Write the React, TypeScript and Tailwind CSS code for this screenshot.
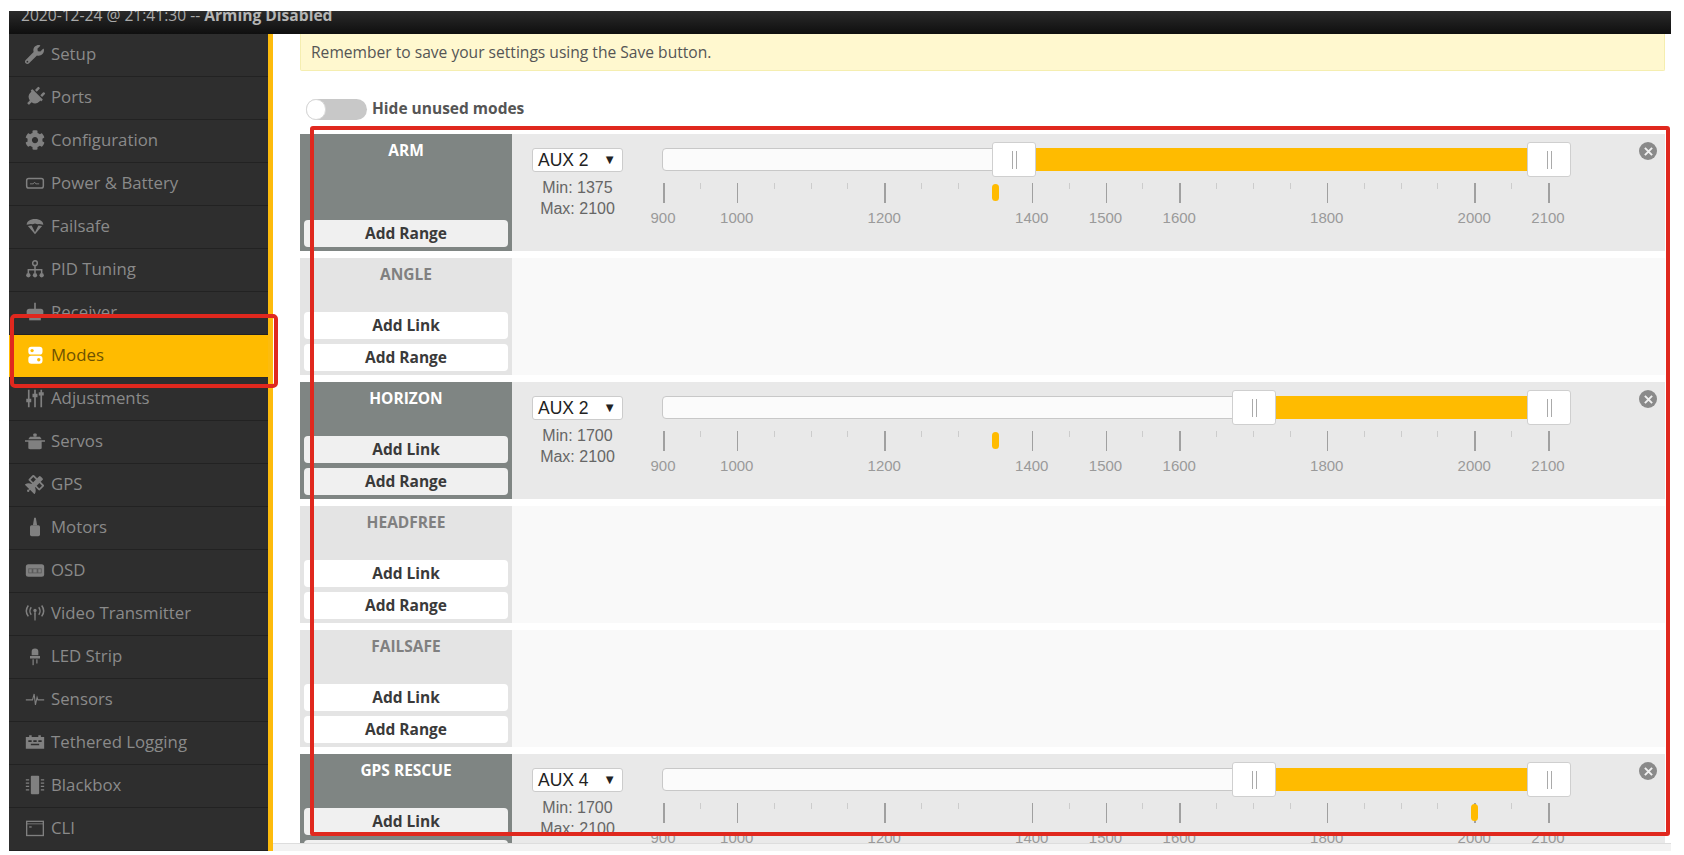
import React from "react";
import { FaWrench, FaPlug, FaCog, FaSatellite } from "react-icons/fa";

const Svg = ({ children }: { children: React.ReactNode }) => (
  <svg viewBox="0 0 24 24" className="h-[20px] w-[20px]" fill="currentColor">
    {children}
  </svg>
);

const icons: Record<string, React.ReactNode> = {
  Setup: <FaWrench className="h-[19px] w-[19px]" />,
  Ports: <FaPlug className="h-[20px] w-[20px] rotate-45" />,
  Configuration: <FaCog className="h-[20px] w-[20px]" />,
  "Power & Battery": (
    <Svg>
      <rect x="2" y="6.500" width="20" height="11.500" rx="2.500" fill="none" stroke="currentColor" strokeWidth="1.800" />
      <path d="M6 13h4l1.500-2 1.500 2h4" fill="none" stroke="currentColor" strokeWidth="1.100" />
    </Svg>
  ),
  Failsafe: (
    <Svg>
      <path d="M2 10.500c0-4 4-7 10-7s10 3 10 7l-5-1-2 .5-3-1-3 1-2-.5z" />
      <path d="M3.500 12l8.500 10 8.500-10-4.500-.5-4 8-4-8z" />
    </Svg>
  ),
  "PID Tuning": (
    <Svg>
      <circle cx="12" cy="5" r="2.800" fill="none" stroke="currentColor" strokeWidth="1.800" />
      <path d="M12 8v9M4 17v-4h16v4" fill="none" stroke="currentColor" strokeWidth="1.800" />
      <circle cx="4" cy="19.500" r="2.600" />
      <circle cx="12" cy="19.500" r="2.600" />
      <circle cx="20" cy="19.500" r="2.600" />
    </Svg>
  ),
  Receiver: (
    <Svg>
      <path d="M11 1h2v8h-2z" />
      <rect x="2" y="8" width="20" height="10" rx="3" />
      <rect x="5" y="19" width="14" height="3" />
    </Svg>
  ),
  Modes: (
    <Svg>
      <rect x="4" y="2" width="17" height="9.500" rx="3.500" fill="#ffffff" />
      <rect x="4" y="13" width="17" height="9.500" rx="3.500" fill="#ffffff" />
      <circle cx="8.500" cy="6.700" r="2" fill="#ffbb00" />
      <circle cx="16.500" cy="17.700" r="2" fill="#ffbb00" />
    </Svg>
  ),
  Adjustments: (
    <Svg>
      <path d="M3.500 2h2v21h-2zM11 2h2v21h-2zM18.500 2h2v21h-2z" />
      <path d="M1.500 13h6v4h-6zM9 7h6v4H9zM16.500 5h6v4h-6z" />
    </Svg>
  ),
  Servos: (
    <Svg>
      <rect x="10" y="3" width="4" height="4" rx="1" />
      <path d="M6 7h12l2 3H4z" />
      <path d="M0 11h24v2h-4v8l-2 1H6l-2-1v-8H0z" />
    </Svg>
  ),
  GPS: <FaSatellite className="h-[19px] w-[19px]" />,
  Motors: (
    <Svg>
      <path d="M11 1h2l1.500 9h-5z" />
      <rect x="6" y="10" width="12" height="13" rx="2" />
    </Svg>
  ),
  OSD: (
    <Svg>
      <rect x="1" y="5" width="22" height="15" rx="3" />
      <path d="M4 10h16v6H4z" fill="#5a5a5a" />
      <path d="M5 11h3v4H5zM10 11h4v4h-4zM16 11h3v4h-3z" />
    </Svg>
  ),
  "Video Transmitter": (
    <Svg>
      <path d="M11 11h2l-.3 10h-1.400z" />
      <circle cx="12" cy="9" r="2" />
      <path
        d="M7.500 5c-2 2.500-2 6.500 0 9M16.500 5c2 2.500 2 6.500 0 9M4 3c-3 4-3 9 0 13M20 3c3 4 3 9 0 13"
        fill="none"
        stroke="currentColor"
        strokeWidth="1.800"
      />
    </Svg>
  ),
  "LED Strip": (
    <Svg>
      <path d="M8 11V7a4 4 0 0 1 8 0v4z" />
      <rect x="6" y="12" width="12" height="3" />
      <rect x="9" y="16" width="1.500" height="7" />
      <rect x="13.500" y="16" width="1.500" height="5" />
    </Svg>
  ),
  Sensors: (
    <Svg>
      <path d="M1 13h8l2-7 1.500 13 2-9 1 3h7.500" fill="none" stroke="currentColor" strokeWidth="1.300" />
    </Svg>
  ),
  "Tethered Logging": (
    <Svg>
      <path d="M1 6h4v-2h3v2h8v-2h3v2h4v14H1z" />
      <path d="M4 10h4v2H4zM10 10h4v2h-4zM16 10h4v2h-4zM7 14h10v2H7z" fill="#2e2e2e" />
    </Svg>
  ),
  Blackbox: (
    <Svg>
      <rect x="7" y="1" width="10" height="22" rx="1" />
      <path d="M1 5h4v1.500H1zM1 9h4v1.500H1zM1 13h4v1.500H1zM1 17h4v1.500H1zM19 5h4v1.500h-4zM19 9h4v1.500h-4zM19 13h4v1.500h-4zM19 17h4v1.500h-4z" />
    </Svg>
  ),
  CLI: (
    <Svg>
      <rect x="2" y="4" width="20" height="17" fill="none" stroke="currentColor" strokeWidth="1.600" />
      <path d="M2 7h20" stroke="currentColor" strokeWidth="1" />
      <path d="M5 10h3v1.500H5z" />
    </Svg>
  ),
};

const menu = [
  "Setup",
  "Ports",
  "Configuration",
  "Power & Battery",
  "Failsafe",
  "PID Tuning",
  "Receiver",
  "Modes",
  "Adjustments",
  "Servos",
  "GPS",
  "Motors",
  "OSD",
  "Video Transmitter",
  "LED Strip",
  "Sensors",
  "Tethered Logging",
  "Blackbox",
  "CLI",
];

const modes = [
  { name: "ARM", link: false, aux: "AUX 2", min: 1375, max: 2100, marker: 1350 },
  { name: "ANGLE", link: true },
  { name: "HORIZON", link: true, aux: "AUX 2", min: 1700, max: 2100, marker: 1350 },
  { name: "HEADFREE", link: true },
  { name: "FAILSAFE", link: true },
  { name: "GPS RESCUE", link: true, aux: "AUX 4", min: 1700, max: 2100, marker: 2000 },
];

const bigTicks = [900, 1000, 1200, 1400, 1500, 1600, 1800, 2000, 2100];
const smallTicks = [950, 1050, 1100, 1150, 1250, 1300, 1450, 1550, 1650, 1700, 1750, 1850, 1900, 1950, 2050];

// 900..2100 on the 885px wide slider
const pos = (v: number) => ((v - 900) / 1200) * 885;

const Handle = ({ value }: { value: number }) => (
  <div
    className="absolute top-[-6px] ml-[-21px] flex h-[35px] w-[44px] items-center justify-center gap-[3px] rounded-[3px] border border-[#cfcfcf] bg-white"
    style={{ left: pos(value) }}
  >
    <span className="h-[18px] w-px bg-[#aaaaaa]" />
    <span className="h-[18px] w-px bg-[#aaaaaa]" />
  </div>
);

const RangeSlider = ({ min, max, marker }: { min: number; max: number; marker: number }) => (
  <div className="relative ml-10 h-full w-[885px] font-['Liberation_Sans',Arial,sans-serif]">
    <div className="absolute left-[-1px] top-0 h-[23px] w-full rounded-l-[4px] border border-[#c8c8c8] bg-[#fbfbfb]" />
    <div
      className="absolute top-0 h-[23px] bg-[#ffbb00]"
      style={{ left: pos(min), width: pos(max) - pos(min) }}
    />
    <Handle value={min} />
    <Handle value={max} />
    {smallTicks.map((t) => (
      <span
        key={t}
        className="absolute top-[35px] h-[6px] w-px bg-[#cccccc]"
        style={{ left: pos(t) }}
      />
    ))}
    {bigTicks.map((t) => (
      <React.Fragment key={t}>
        <span
          className="absolute top-[35px] h-[20px] w-[1.500px] bg-[#a0a0a0]"
          style={{ left: pos(t) }}
        />
        <span
          className="absolute top-[60px] ml-[-25px] w-[50px] text-center text-[15px] leading-[20px] text-[#9a9a9a]"
          style={{ left: pos(t) }}
        >
          {t}
        </span>
      </React.Fragment>
    ))}
    <span
      className="absolute top-[36px] ml-[-3px] h-[17px] w-[7px] rounded-[4px] bg-[#ffbb00]"
      style={{ left: pos(marker) }}
    />
  </div>
);

const AddButton = ({ label, active }: { label: string; active: boolean }) => (
  <div
    className={
      "flex h-[27px] items-center justify-center rounded-[4px] text-[15.500px] font-bold text-[#3a3a3a] " +
      (active ? "bg-[#f0f0f0]" : "bg-white")
    }
  >
    {label}
  </div>
);

const ModeRow = ({ mode }: { mode: (typeof modes)[number] }) => {
  const active = !!mode.aux;
  return (
    <div className={"flex h-[117px] shrink-0 " + (active ? "bg-[#e9e9e9]" : "bg-[#f9f9f9]")}>
      <div
        className={
          "flex w-[212px] shrink-0 flex-col px-[4px] pb-[4px] pt-[6px] " +
          (active ? "bg-[#7f8583]" : "bg-[#e4e4e4]")
        }
      >
        <div
          className={
            "mb-auto text-center text-[15.500px] font-bold leading-[20px] " +
            (active ? "text-white" : "text-[#808080]")
          }
        >
          {mode.name}
        </div>
        <div className="flex flex-col gap-[5px]">
          {mode.link && <AddButton label="Add Link" active={active} />}
          <AddButton label="Add Range" active={active} />
        </div>
      </div>
      {active && (
        <div className="flex flex-1 pl-[20px] pt-[14px]">
          <div className="w-[91px] shrink-0 font-['Liberation_Sans',Arial,sans-serif]">
            <div className="flex h-[24px] items-center justify-between rounded-[3px] border border-[#cccccc] bg-white pl-[5px] pr-[6px] text-[17.500px] text-[#222222]">
              <span>{mode.aux}</span>
              <span className="text-[13px] text-[#222222]">▼</span>
            </div>
            <div className="mt-[5px] text-center text-[16px] leading-[21px] text-[#666666]">
              <div>Min: {mode.min}</div>
              <div>Max: {mode.max}</div>
            </div>
          </div>
          <RangeSlider min={mode.min!} max={mode.max!} marker={mode.marker!} />
          <div className="ml-auto mr-[8px] mt-[-6px] flex h-[18px] w-[18px] items-center justify-center rounded-full bg-[#8a8a8a]">
            <svg viewBox="0 0 10 10" className="h-[9px] w-[9px]" stroke="#f0f0f0" strokeWidth="2.200">
              <path d="M1 1l8 8M9 1l-8 8" />
            </svg>
          </div>
        </div>
      )}
    </div>
  );
};

const App: React.FC = () => {
  return (
    <div className="relative h-[855px] w-[1684px] overflow-hidden bg-white font-['Open_Sans',sans-serif]">
      <div className="ml-[9px] flex h-[851px] w-[1662px] flex-col pt-[11px]">
        <div className="h-[23px] shrink-0 overflow-hidden bg-gradient-to-b from-[#2b2b2b] to-[#0f0f0f] pl-[12px]">
          <div className="mt-[-8px] text-[15.600px] leading-[24px] text-[#aaaaaa]">
            2020-12-24 @ 21:41:30 -- <span className="font-bold text-[#b5b5b5]">Arming Disabled</span>
          </div>
        </div>
        <div className="flex min-h-0 flex-1">
          <div className="w-[259px] shrink-0 bg-[#2e2e2e]">
            {menu.map((item) => (
              <div
                key={item}
                className={
                  "flex h-[43px] items-center border-b pb-[2px] text-[16.800px] " +
                  (item === "Modes"
                    ? "border-[#2a2a2a] bg-[#ffbb00] text-[#6e5200]"
                    : "border-[#222222] text-[#8a8a8a]")
                }
              >
                <span
                  className={
                    "flex w-[50px] shrink-0 justify-center pl-[1px] " +
                    (item === "Modes" ? "text-white" : "text-[#808080]")
                  }
                >
                  {icons[item]}
                </span>
                <span className="ml-[-8px]">{item}</span>
              </div>
            ))}
          </div>
          <div className="w-[5px] shrink-0 bg-[#fdbb0d]" />
          <div className="flex min-w-0 flex-1 flex-col">
            <div className="min-h-0 flex-1 overflow-hidden pl-[27px] pr-[6px]">
              <div className="flex h-[37px] items-center rounded-b-[2px] border border-t-0 border-[#f5eeb0] bg-[#fff8cf] pl-[10px] pt-[1px] text-[15.600px] text-[#555555]">
                Remember to save your settings using the Save button.
              </div>
              <div className="ml-[6px] mt-[28px] flex h-[21px] items-center gap-[5px]">
                <div className="h-[21px] w-[61px] rounded-full bg-[#c8c8c8]">
                  <div className="h-[21px] w-[20px] rounded-full border border-[#d8d8d8] bg-white" />
                </div>
                <span className="mt-[-2px] text-[15.500px] font-bold text-[#555555]">Hide unused modes</span>
              </div>
              <div className="mt-[14px] flex flex-col gap-[7px]">
                {modes.map((m) => (
                  <ModeRow key={m.name} mode={m} />
                ))}
              </div>
            </div>
            <div className="h-[8px] shrink-0 border-t border-[#dddddd] bg-[#f2f2f2]" />
          </div>
        </div>
      </div>
      {/* red annotation boxes drawn over the screenshot */}
      <div className="pointer-events-none absolute left-[310px] top-[126px] h-[710px] w-[1360px] rounded-[3px] border-4 border-[#e0281e]" />
      <div className="pointer-events-none absolute left-[10px] top-[314px] h-[74px] w-[268px] rounded-[5px] border-4 border-[#e0281e]" />
    </div>
  );
};

export default App;
